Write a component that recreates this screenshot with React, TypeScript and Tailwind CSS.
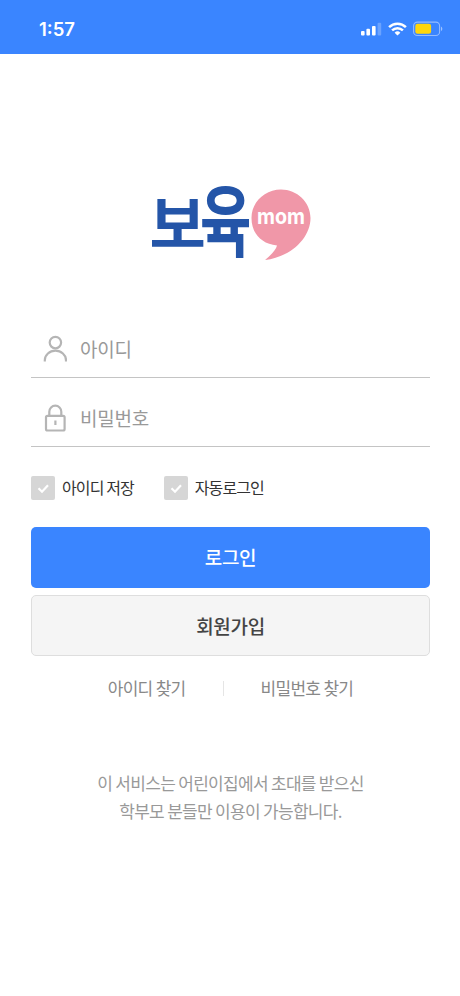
import { useState } from "react"
import type { ReactNode } from "react"

function StatusBar() {
  return (
    <header className="flex h-[54px] items-center justify-between bg-[#3a85ff] pr-[17px] pl-[39px] pt-[3px]">
      <span className="font-['Inter','Liberation_Sans',sans-serif] text-[18.5px] font-semibold leading-6 text-white">1:57</span>
      <div className="flex items-center">
        <svg width="22" height="14" viewBox="0 0 22 14" fill="#fff">
          <rect x="1" y="9" width="3.6" height="4.5" rx="1" />
          <rect x="6.4" y="6.8" width="3.6" height="6.7" rx="1" />
          <rect x="12" y="4" width="3.6" height="9.5" rx="1" />
          <rect x="17.6" y="0.8" width="3.6" height="12.7" rx="1" fillOpacity="0.25" />
        </svg>
        <svg className="ml-[6px]" width="19" height="14" viewBox="0 0 19 14" fill="none" stroke="#fff" strokeWidth="2.5">
          <path d="M1.1 5.1a12 12 0 0 1 16.8 0" />
          <path d="M4.1 8.4a7.7 7.7 0 0 1 10.8 0" />
          <path d="M9.5 13.6 6.6 10.7a4.1 4.1 0 0 1 5.8 0z" fill="#fff" stroke="none" />
        </svg>
        <svg className="ml-[6px]" width="30" height="16" viewBox="0 0 30 16">
          <rect x="0.6" y="1.1" width="26" height="13.4" rx="3.8" fill="none" stroke="#fff" strokeOpacity="0.45" strokeWidth="1.1" />
          <rect x="2.3" y="2.8" width="15.8" height="10" rx="2.2" fill="#ffd60a" />
          <path d="M28 5.5c1.8.8 1.8 3.8 0 4.6z" fill="#fff" fillOpacity="0.5" />
        </svg>
      </div>
    </header>
  )
}

function Logo() {
  return (
    <svg className="ml-[140px] mt-[81px]" width="180" height="160" viewBox="0 -40 180 160">
      <g fill="#2455a8" fontFamily="'Noto Sans CJK KR', sans-serif" fontWeight="700">
        <text transform="translate(9.500 72.500) scale(1.02 1.04)" fontSize="60">보</text>
        <text transform="translate(60 75.500) scale(0.93 1.3)" fontSize="60">육</text>
      </g>
      <path
        d="M141 14.5C157 14.5 170.500 27 170.500 43C170.500 63 151 82 125 85C131 80 136 75 137 70.500C121 69 111.500 58 111.500 43C111.500 27 125 14.500 141 14.500Z"
        fill="#f097a8"
      />
      <text x="117" y="49.200" textLength="48" lengthAdjust="spacingAndGlyphs" fontSize="22" fontWeight="700" fill="#fff" fontFamily="Inter, 'Liberation Sans', sans-serif">
        mom
      </text>
    </svg>
  )
}

function UserIcon() {
  return (
    <svg width="24" height="28" viewBox="0 0 24 28" fill="none" stroke="#b5b5b5" strokeWidth="2.2">
      <circle cx="12.400" cy="7.600" r="5.700" />
      <path d="M1.800 26.500v-1.300a10.600 9.500 0 0 1 21.200 0v1.300" />
    </svg>
  )
}

function LockIcon() {
  return (
    <svg width="24" height="28" viewBox="0 0 24 28" fill="none" stroke="#b5b5b5" strokeWidth="2.2">
      <path d="M6.300 11.500V7.700a6 6 0 0 1 12 0v3.800" />
      <rect x="3" y="11.800" width="18.600" height="14.700" rx="1.500" />
      <path d="M12.400 16.500v4.500" />
    </svg>
  )
}

type FieldProps = {
  icon: ReactNode
  type: string
  placeholder: string
}

function Field({ icon, type, placeholder }: FieldProps) {
  return (
    <label className="flex h-[69px] items-center border-b border-[#c4c4c4] pt-[11px] pl-[12px]">
      {icon}
      <input
        type={type}
        placeholder={placeholder}
        className="ml-[13px] h-8 flex-1 text-[19px] tracking-[-0.2px] text-[#444] outline-none placeholder:text-[#999]"
      />
    </label>
  )
}

function CheckOption({ label }: { label: string }) {
  const [checked, setChecked] = useState(false)

  return (
    <button type="button" className="flex h-6 items-center" onClick={() => setChecked(!checked)}>
      <span className={checked ? "flex size-6 items-center justify-center rounded-[2px] bg-[#3a85ff]" : "flex size-6 items-center justify-center rounded-[2px] bg-[#d6d6d6]"}>
        <svg className="ml-px" width="13" height="11" viewBox="0 0 13 11" fill="none" stroke="#fff" strokeWidth="2.2">
          <path d="m1.500 5.300 3.500 3.400 6-6.500" />
        </svg>
      </span>
      <span className="-mt-[2px] ml-[7px] text-[16px] leading-6 tracking-[-0.9px] text-[#333]">{label}</span>
    </button>
  )
}

export default function App() {
  return (
    <div className="min-h-[996px] w-[460px] bg-white font-['Noto_Sans_CJK_KR',sans-serif]">
      <StatusBar />
      <Logo />

      <main className="mt-[14px] pl-[31px] pr-[30px]">
        <Field icon={<UserIcon />} type="text" placeholder="아이디" />
        <Field icon={<LockIcon />} type="password" placeholder="비밀번호" />

        <div className="mt-[29px] flex gap-[30px]">
          <CheckOption label="아이디 저장" />
          <CheckOption label="자동로그인" />
        </div>

        <div className="mt-[27px] flex flex-col gap-[7px]">
          <button type="button" className="h-[61px] rounded-[5px] bg-[#3a85ff] text-[19px] font-medium tracking-[-0.3px] text-white">
            로그인
          </button>
          <button type="button" className="h-[61px] rounded-[5px] border border-[#dedede] bg-[#f5f5f5] pt-px text-[19px] font-medium tracking-[-0.3px] text-[#444]">
            회원가입
          </button>
        </div>

        <div className="mt-[20px] flex items-center justify-center">
          <a href="#" className="text-[17px] leading-6 tracking-[-0.7px] text-[#888]">아이디 찾기</a>
          <span className="mx-[37px] h-[15px] w-px bg-[#e5e5e5]" />
          <a href="#" className="text-[17px] leading-6 tracking-[-0.7px] text-[#888]">비밀번호 찾기</a>
        </div>

        <p className="mt-[69px] text-center text-[17px] leading-[28px] tracking-[-0.7px] text-[#999]">
          이 서비스는 어린이집에서 초대를 받으신
          <br />
          학부모 분들만 이용이 가능합니다.
        </p>
      </main>
    </div>
  )
}
